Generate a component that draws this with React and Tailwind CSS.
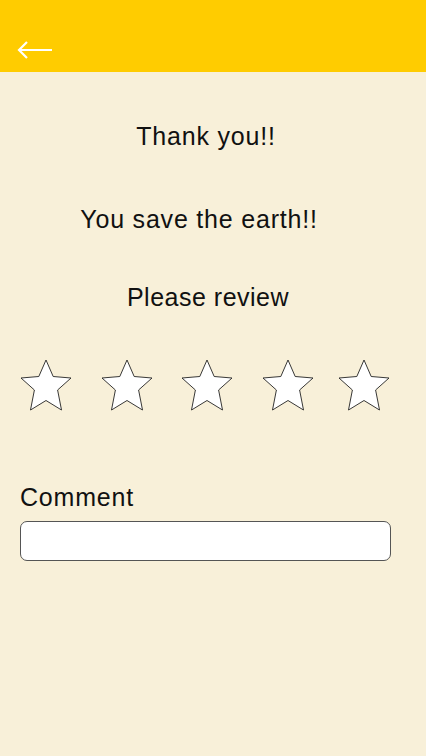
import React from "react";

function Star() {
  return (
    <svg width="54" height="54" viewBox="0 0 54 54">
      <polygon
        points="26,1 33.2,17.5 51,19 37.6,31 41.5,51 26,41.5 10.5,51 14.4,31 1,19 18.8,17.5"
        fill="#ffffff"
        stroke="#222222"
        strokeWidth="0.9"
        strokeLinejoin="miter"
      />
    </svg>
  );
}

export default function App() {
  return (
    <div
      className="w-[426px] h-[756px] bg-[#f8f0d9] flex flex-col"
      style={{ fontFamily: '"Liberation Sans", Arial, sans-serif' }}
    >
      <div className="h-[72px] bg-[#ffcc00] flex items-end pb-[13px] pl-[17px]">
        <svg width="36" height="18" viewBox="0 0 36 18">
          <path d="M35 9 H2 M10 1 L2 9 L10 17" fill="none" stroke="#ffffff" strokeWidth="2.2" />
        </svg>
      </div>
      <div className="flex flex-col items-center text-[25px] text-[#111] tracking-[0.8px]">
        <div className="mt-[50px] leading-[28px] pr-[14px]">Thank you!!</div>
        <div className="mt-[55px] leading-[28px] pr-[28px]">You save the earth!!</div>
        <div className="mt-[50px] leading-[28px] pr-[10px] tracking-[0.5px]">Please review</div>
      </div>
      <div className="flex mt-[48px] pl-[20px]">
        <div className="w-[81px]"><Star /></div>
        <div className="w-[80px]"><Star /></div>
        <div className="w-[81px]"><Star /></div>
        <div className="w-[76px]"><Star /></div>
        <div><Star /></div>
      </div>
      <div className="mt-[70px] px-[20px]">
        <div className="text-[25px] leading-[28px] text-[#111] tracking-[0.8px]">Comment</div>
        <div className="mt-[10px] w-[371px] h-[40px] bg-white border border-[#555] rounded-[7px]" />
      </div>
    </div>
  );
}
